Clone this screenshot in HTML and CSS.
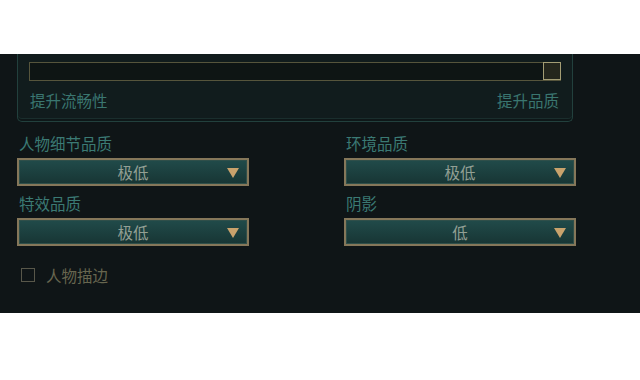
FILE: index.html
```html
<!DOCTYPE html>
<html lang="zh-CN">
<head>
    <meta charset="UTF-8">
    <meta name="viewport" content="width=device-width, initial-scale=1.0">
    <title>画质设置</title>
    <link rel="stylesheet" href="styles.css">
</head>
<body>
    <div class="settings">
        <div class="panel">
            <div class="track">
                <div class="thumb"></div>
            </div>
            <div class="track-labels">
                <span>提升流畅性</span>
                <span>提升品质</span>
            </div>
        </div>

        <div class="fields">
            <div class="field">
                <div class="field-label">人物细节品质</div>
                <div class="select"><span>极低</span><i class="arrow"></i></div>
            </div>
            <div class="field">
                <div class="field-label">环境品质</div>
                <div class="select"><span>极低</span><i class="arrow"></i></div>
            </div>
            <div class="field">
                <div class="field-label">特效品质</div>
                <div class="select"><span>极低</span><i class="arrow"></i></div>
            </div>
            <div class="field">
                <div class="field-label">阴影</div>
                <div class="select"><span>低</span><i class="arrow"></i></div>
            </div>
        </div>

        <label class="check">
            <span class="box"></span>
            <span>人物描边</span>
        </label>
    </div>
</body>
</html>
```

FILE: styles.css
```css
body {
    margin: 0;
    background: #fff;
    font-family: "Noto Sans CJK SC", "Noto Sans", sans-serif;
}

.settings {
    margin-top: 54px;
    height: 259px;
    background: #0f1517;
    overflow: hidden;
}

.panel {
    margin-left: 17px;
    width: 532px;
    padding: 8px 11px 0 11px;
    height: 59px;
    background: #111c1d;
    border: 1px solid #22403d;
    border-top: none;
    border-radius: 0 0 5px 5px;
    box-shadow: inset 0 -2px 0 #0e1718, inset 0 -3px 0 #1a2e2d;
}

.track {
    height: 17px;
    background: #0e1514;
    border: 1px solid #56553c;
    display: flex;
    justify-content: flex-end;
}

.thumb {
    width: 16px;
    height: 16px;
    margin: -1px -1px 0 0;
    background: #24261c;
    border: 1px solid #a39d74;
}

.track-labels {
    display: flex;
    justify-content: space-between;
    margin-top: 9px;
    padding: 0 2px 0 1px;
    font-size: 15.5px;
    line-height: 20px;
    color: #3a7670;
}

.fields {
    display: grid;
    grid-template-columns: 232px 232px;
    column-gap: 95px;
    margin: 11px 0 0 17px;
}

.field {
    margin-bottom: 7px;
}

.field-label {
    font-size: 15.5px;
    line-height: 20px;
    margin: 0 0 5px 2px;
    color: #3b7a74;
}

.select {
    position: relative;
    box-sizing: border-box;
    height: 28px;
    border: 2px solid #85775a;
    box-shadow: inset 0 0 0 1px #2f4f4a;
    background: linear-gradient(to bottom, #214b4a, #173534);
    text-align: center;
    font-size: 15.5px;
    line-height: 24px;
    color: #929f94;
}

.arrow {
    position: absolute;
    right: 8px;
    top: 8px;
    width: 0;
    height: 0;
    border-left: 6px solid transparent;
    border-right: 6px solid transparent;
    border-top: 10px solid #c8a26c;
}

.check {
    display: flex;
    align-items: center;
    margin: 12px 0 0 21px;
    font-size: 15.5px;
    line-height: 20px;
    color: #67664f;
}

.box {
    width: 12px;
    height: 12px;
    border: 1px solid #58574a;
    margin-right: 11px;
}
```
